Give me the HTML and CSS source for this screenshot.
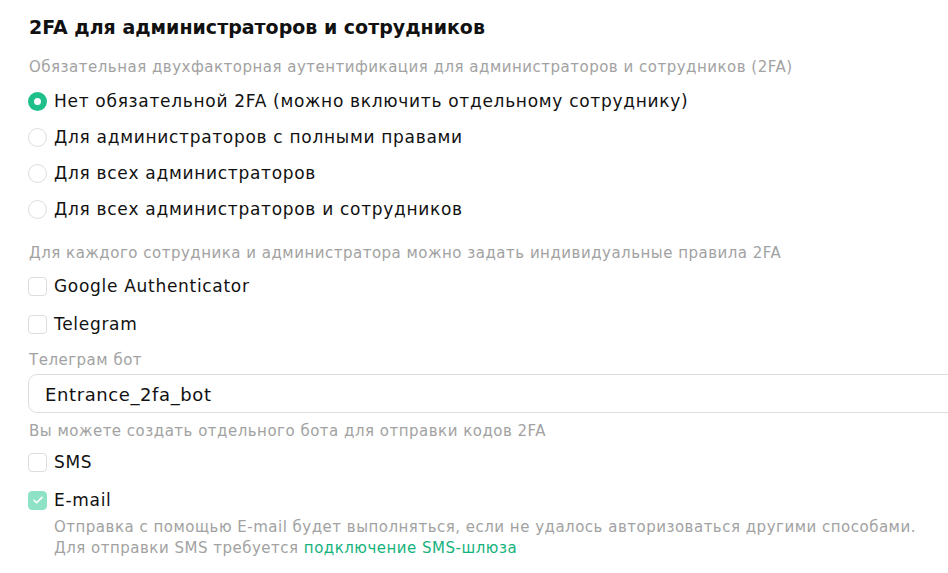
FILE: index.html
```html
<!DOCTYPE html>
<html lang="ru">
<head>
    <meta charset="UTF-8">
    <title>2FA</title>
    <link rel="stylesheet" href="styles.css">
</head>
<body>
    <div class="panel">
        <h2 class="title">2FA для администраторов и сотрудников</h2>

        <p class="hint">Обязательная двухфакторная аутентификация для администраторов и сотрудников (2FA)</p>
        <label class="option"><span class="radio checked"></span>Нет обязательной 2FA (можно включить отдельному сотруднику)</label>
        <label class="option"><span class="radio"></span>Для администраторов с полными правами</label>
        <label class="option"><span class="radio"></span>Для всех администраторов</label>
        <label class="option"><span class="radio"></span>Для всех администраторов и сотрудников</label>

        <p class="hint hint-gap">Для каждого сотрудника и администратора можно задать индивидуальные правила 2FA</p>
        <label class="option check-row"><span class="check"></span>Google Authenticator</label>
        <label class="option check-row"><span class="check"></span>Telegram</label>

        <p class="hint field-label">Телеграм бот</p>
        <div class="input">Entrance_2fa_bot</div>
        <p class="hint">Вы можете создать отдельного бота для отправки кодов 2FA</p>

        <label class="option check-row"><span class="check"></span>SMS</label>
        <label class="option check-row"><span class="check checked">
            <svg width="12" height="12" viewBox="0 0 12 12"><path d="M2 6.2l2.6 2.6L10 3.4" fill="none" stroke="#fff" stroke-width="1.6" stroke-linecap="round" stroke-linejoin="round"/></svg>
        </span>E-mail</label>
        <div class="note">
            Отправка с помощью E-mail будет выполняться, если не удалось авторизоваться другими способами.<br>
            Для отправки SMS требуется <a href="#">подключение SMS-шлюза</a>
        </div>
    </div>
</body>
</html>
```

FILE: styles.css
```css
html, body {
    margin: 0;
    overflow: hidden;
}
body {
    font-family: "DejaVu Sans", sans-serif;
    color: #111;
    background-color: #fff;
}
.panel {
    width: 940px;
    padding-left: 28px;
    display: flex;
    flex-direction: column;
}
.title {
    font-size: 19px;
    font-weight: 700;
    line-height: 24px;
    margin: 15px 0 0 1px;
}
.hint {
    font-size: 15px;
    line-height: 20px;
    letter-spacing: 0.5px;
    color: #a2a2a2;
    margin: 18px 0 6px 1px;
}
.hint-gap {
    margin-top: 16px;
    margin-bottom: 4px;
}
.option {
    display: flex;
    align-items: center;
    gap: 7px;
    height: 36px;
    font-size: 17px;
    letter-spacing: 0.7px;
}
.check-row {
    height: 38px;
}
.radio {
    width: 17px;
    height: 17px;
    border: 1px solid #ddd;
    border-radius: 50%;
    box-sizing: content-box;
    flex-shrink: 0;
}
.radio.checked {
    border: 6px solid #1fbf8b;
    width: 7px;
    height: 7px;
    background-color: #fff;
}
.check {
    width: 17px;
    height: 17px;
    border: 1px solid #ddd;
    border-radius: 4px;
    flex-shrink: 0;
    display: flex;
    align-items: center;
    justify-content: center;
}
.check.checked {
    background-color: #8ee3c6;
    border-color: #8ee3c6;
}
.field-label {
    margin: 7px 0 4px 1px;
}
.input {
    height: 37px;
    border: 1px solid #ddd;
    border-radius: 9px;
    padding-left: 16px;
    font-size: 18px;
    letter-spacing: 0.6px;
    line-height: 40px;
}
.note {
    font-size: 15px;
    line-height: 21px;
    letter-spacing: 0.5px;
    color: #a2a2a2;
    margin-left: 26px;
    margin-top: -2px;
}
.note a {
    color: #14b27c;
    text-decoration: none;
}
.input + .hint {
    margin: 8px 0 2px 1px;
}
```
